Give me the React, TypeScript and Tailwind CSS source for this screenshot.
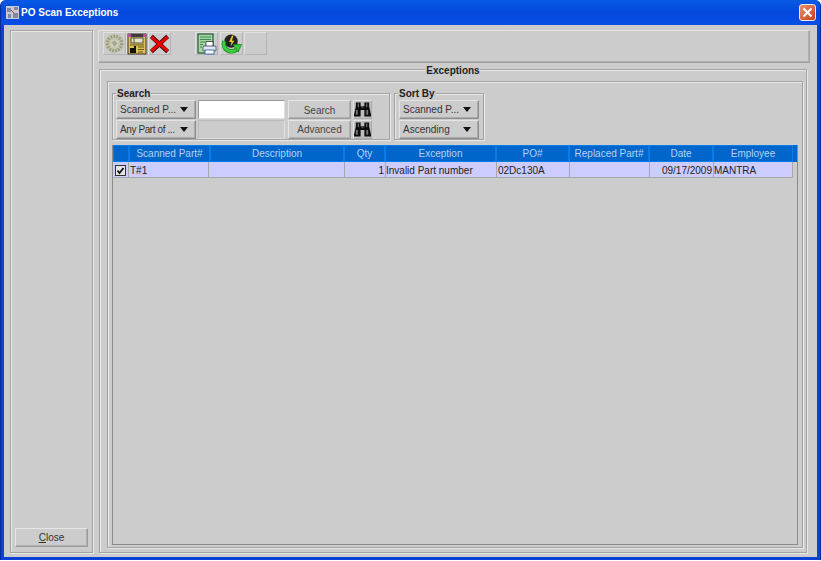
const FONT = "[font-family:'Liberation_Sans',Arial,sans-serif]";

const COLUMNS = [
  { label: "", width: "w-[16px]" },
  { label: "Scanned Part#", width: "w-[81px]" },
  { label: "Description", width: "w-[134px]" },
  { label: "Qty", width: "w-[41px]" },
  { label: "Exception", width: "w-[111px]" },
  { label: "PO#", width: "w-[73px]" },
  { label: "Replaced Part#", width: "w-[80px]" },
  { label: "Date", width: "w-[64px]" },
  { label: "Employee", width: "w-[80px]" },
];

const ETCHED = "border border-[#a3a3a3] shadow-[inset_1px_1px_0_#e8e8e8,1px_1px_0_#e8e8e8]";
const RAISED = "border border-[#9c9c9c] border-t-[#e6e6e6] border-l-[#e6e6e6] shadow-[inset_-1px_-1px_0_#b0b0b0]";

function GearIcon() {
  return (
    <svg viewBox="0 0 20 20" className="h-[21px] w-[21px]">
      <circle cx="10" cy="10" r="9.500" fill="#c4c4ae" />
      <circle cx="10" cy="10" r="6.800" fill="none" stroke="#9c9c84" strokeWidth="3" strokeDasharray="1.600 1.200" />
      <circle cx="10" cy="10" r="3.500" fill="#d2d2c0" />
      <path d="M7 9l3-2 3 3-3 3z" fill="#a8a890" />
    </svg>
  );
}

function FormIcon() {
  return (
    <svg viewBox="0 0 20 22" className="h-[22px] w-[20px]">
      <rect x="1" y="1" width="18" height="20" fill="#dcc25c" stroke="#3a3420" />
      <rect x="1" y="1" width="18" height="3" fill="#3d3d3d" />
      <rect x="1" y="1" width="3" height="3" fill="#c04aa0" />
      <rect x="16" y="1" width="3" height="3" fill="#c04aa0" />
      <rect x="4" y="5" width="12" height="5" fill="#e6e2c8" stroke="#333" strokeWidth="0.8" />
      <path d="M7 5v5M3 12h14M11 14h6M11 16.500h6M11 19h5" stroke="#5a4a10" strokeWidth="0.9" />
      <rect x="3" y="15" width="6" height="5" fill="#111" />
      <rect x="7" y="13" width="2" height="2" fill="#111" />
    </svg>
  );
}

function DeleteIcon() {
  return (
    <svg viewBox="0 0 22 20" className="h-[20px] w-[22px]">
      <path d="M2.500 2L19.500 18M19.500 2L2.500 18" stroke="#300000" strokeWidth="4.400" />
      <path d="M2.500 2.500L19.500 17.500M19.500 2.500L2.500 17.500" stroke="#ee0000" strokeWidth="3" />
    </svg>
  );
}

function PrintIcon() {
  return (
    <svg viewBox="0 0 20 22" className="h-[22px] w-[20px]">
      <rect x="1" y="1" width="15" height="19" fill="#a8d4aa" stroke="#1f5a2c" strokeWidth="1.200" />
      <path d="M3 4h11M3 6.500h11M3 9h5M3 11.500h3M3 14h2" stroke="#3f8a50" />
      <rect x="9" y="8.500" width="7" height="5" fill="#fff" stroke="#333" strokeWidth="0.8" />
      <rect x="6" y="13" width="13" height="5" rx="1" fill="#dfe8f2" stroke="#345" strokeWidth="0.8" />
      <rect x="8" y="17" width="9" height="4" fill="#fff" stroke="#2a55a0" strokeWidth="0.8" />
    </svg>
  );
}

function RefreshIcon() {
  return (
    <svg viewBox="0 0 22 22" className="h-[22px] w-[22px]">
      <circle cx="10.500" cy="8" r="7" fill="#222" />
      <path d="M11.500 2L8.500 9h2.500l-1 4.500 4-6h-2.500l1.500-5.500z" fill="#f2c81e" />
      <path d="M3.500 8a8 8 0 0 0 12.500 9" fill="none" stroke="#0c7d1a" strokeWidth="4.600" />
      <path d="M3.500 8a8 8 0 0 0 12.500 9" fill="none" stroke="#3cd03a" strokeWidth="3" />
      <path d="M12.500 11.500h9l-3.500 8z" fill="#35c935" stroke="#0c7d1a" strokeWidth="0.7" />
    </svg>
  );
}

function BinocularsIcon() {
  return (
    <svg viewBox="0 0 18 17" className="h-[17px] w-[17px]">
      <path d="M2 1h5v4h4V1h5v4l2 9v2h-7V9H7v7H0v-2l2-9z" fill="#0c0c0c" />
      <rect x="4" y="2" width="1" height="4" fill="#8a8a8a" />
      <rect x="13" y="2" width="1" height="4" fill="#8a8a8a" />
      <rect x="2" y="9" width="2" height="5" fill="#777" />
      <rect x="13" y="9" width="2" height="5" fill="#777" />
      <rect x="8" y="5" width="2" height="2" fill="#555" />
    </svg>
  );
}

function ToolButton({ children, className = "" }: { children?: React.ReactNode; className?: string }) {
  return (
    <div className={`flex h-[23px] items-center justify-center border border-[#e0e0e0] border-r-[#b4b4b4] border-b-[#b4b4b4] ${className}`}>
      {children}
    </div>
  );
}

function Combo({ label, tight = false }: { label: string; tight?: boolean }) {
  return (
    <div className="flex h-[19px] w-[80px] items-center justify-between border border-[#8e8e8e] border-t-[#e4e4e4] border-l-[#e4e4e4] pl-[3px] pr-[7px] text-[10px] text-[#333] shadow-[inset_-1px_-1px_0_#aaaaaa]">
      <span className={`whitespace-nowrap ${tight ? "tracking-[-0.4px]" : ""}`}>{label}</span>
      <span className="h-0 w-0 shrink-0 border-x-[4.5px] border-t-[5px] border-x-transparent border-t-[#111]" />
    </div>
  );
}

function PushButton({ label, className = "" }: { label: string; className?: string }) {
  return (
    <div className={`flex h-[19px] w-[63px] items-center justify-center text-[10px] text-[#444] ${RAISED} ${className}`}>
      {label}
    </div>
  );
}

function FindButton() {
  return (
    <div className="flex h-[19px] w-[19px] items-center justify-center border border-[#e2e2e2] border-b-[#aaaaaa] border-r-[#aaaaaa] bg-[#bdbdbd]">
      <BinocularsIcon />
    </div>
  );
}

function GroupBox({ title, className, children }: { title: string; className: string; children: React.ReactNode }) {
  return (
    <div className={`relative h-[47px] ${ETCHED} ${className}`}>
      <span className="absolute left-[3px] top-[-6px] bg-[#cccccc] px-[1px] text-[10px] font-bold leading-[12px] text-[#222]">
        {title}
      </span>
      {children}
    </div>
  );
}

export default function App() {
  const cell = "flex h-[16px] items-center whitespace-nowrap border-r border-[#a8a8a8] text-[10px] text-[#222]";

  return (
    <div className={`flex h-[560px] w-[821px] flex-col overflow-hidden rounded-t-[6px] border-x border-[#0a2a9c] bg-[#0a3fd8] ${FONT}`}>
      {/* Title bar */}
      <div className="flex h-[25px] shrink-0 items-center justify-between bg-gradient-to-b from-[#0a5ae6] via-[#0349dc] to-[#0a4ee6] pl-[5px] pr-[4px]">
        <div className="flex items-center gap-[2px]">
          <svg viewBox="0 0 13 13" className="h-[13px] w-[13px]">
            <rect width="13" height="13" fill="#c9c9d2" />
            <path d="M1 2h4v4H1zM8 1h4v3H8zM2 8h3v4H2zM7 7h5v5H7z" fill="#7d8aa2" />
            <path d="M5 4l3 3" stroke="#b04040" />
          </svg>
          <span className="text-[10px] font-bold leading-none text-white">PO Scan Exceptions</span>
        </div>
        <div className="flex h-[17px] w-[17px] items-center justify-center rounded-[3px] border border-[#f0e8e0] bg-gradient-to-br from-[#e8906c] to-[#c83c14]">
          <svg viewBox="0 0 11 11" className="h-[11px] w-[11px]">
            <path d="M1.500 1.500l8 8M9.500 1.500l-8 8" stroke="#fff" strokeWidth="2" />
          </svg>
        </div>
      </div>

      {/* Window body */}
      <div className="mx-[3px] mb-[3px] flex min-h-0 flex-1 gap-[5px] bg-[#cccccc] pb-[4px] pl-[6px] pr-[7px] pt-[5px]">
        {/* Left panel */}
        <div className={`flex w-[83px] shrink-0 flex-col justify-end px-[4px] pb-[5px] ${ETCHED}`}>
          <div className={`flex h-[19px] w-[73px] items-center justify-center text-[10px] text-[#333] ${RAISED}`}>
            <span><span className="underline">C</span>lose</span>
          </div>
        </div>

        {/* Right column */}
        <div className="flex min-w-0 flex-1 flex-col gap-[6px]">
          {/* Toolbar */}
          <div className="flex h-[33px] shrink-0 items-start border border-[#a0a0a0] border-t-[#e4e4e4] border-l-[#e4e4e4] pl-[4px] pt-[1px] shadow-[inset_-1px_-1px_0_#b0b0b0]">
            <ToolButton className="w-[23px]"><GearIcon /></ToolButton>
            <ToolButton className="w-[22px]"><FormIcon /></ToolButton>
            <ToolButton className="w-[23px]"><DeleteIcon /></ToolButton>
            <ToolButton className="ml-[24px] w-[23px]"><PrintIcon /></ToolButton>
            <ToolButton className="ml-[2px] w-[23px]"><RefreshIcon /></ToolButton>
            <ToolButton className="ml-[1px] w-[23px]" />
          </div>

          {/* Exceptions */}
          <div className={`relative ml-[1px] mr-[3px] flex min-h-0 flex-1 flex-col pb-[4px] pl-[7px] pr-[3px] pt-[11px] ${ETCHED}`}>
            <span className="absolute left-1/2 top-[-5px] -translate-x-1/2 bg-[#cccccc] px-[1px] text-[10px] font-bold leading-[12px] text-[#222]">
              Exceptions
            </span>
            <div className={`flex min-h-0 flex-1 flex-col pl-[4px] pr-[4px] pt-[11px] pb-[2px] ${ETCHED}`}>
              {/* Search and sort */}
              <div className="flex shrink-0 gap-[4px]">
                <GroupBox title="Search" className="w-[278px]">
                  <div className="flex gap-[2px] pl-[3px] pt-[6px]">
                    <div className="flex flex-col gap-[1px]">
                      <Combo label="Scanned P..." />
                      <Combo label="Any Part of ..." tight />
                    </div>
                    <div className="flex flex-col gap-[1px]">
                      <div className="h-[19px] w-[87px] border border-[#999] border-b-[#ddd] border-r-[#ddd] bg-white" />
                      <div className="h-[19px] w-[87px] border border-[#bbbbbb] border-b-[#e0e0e0] border-r-[#e0e0e0]" />
                    </div>
                    <div className="ml-[1px] flex flex-col gap-[1px]">
                      <PushButton label="Search" className="pt-[1px]" />
                      <PushButton label="Advanced" />
                    </div>
                    <div className="flex flex-col gap-[1px]">
                      <FindButton />
                      <FindButton />
                    </div>
                  </div>
                </GroupBox>
                <GroupBox title="Sort By" className="w-[90px]">
                  <div className="flex flex-col gap-[1px] pl-[4px] pt-[6px]">
                    <Combo label="Scanned P..." />
                    <Combo label="Ascending" />
                  </div>
                </GroupBox>
              </div>

              {/* Table */}
              <div className="mt-[5px] flex min-h-0 flex-1 flex-col border border-[#8c8c8c] border-t-0">
                <div className="flex h-[17px] shrink-0 bg-[#0066cc] pr-[4px]">
                  {COLUMNS.map((col) => (
                    <div
                      key={col.label || "check"}
                      className={`flex shrink-0 items-center justify-center whitespace-nowrap border border-[#0a7ce8] text-[10px] text-[#b6d2f4] ${col.width}`}
                    >
                      {col.label}
                    </div>
                  ))}
                </div>
                <div className="flex h-[16px] w-[680px] shrink-0 border-b border-[#a8a8a8] bg-[#ccccff]">
                  <div className={`${cell} w-[16px] justify-center`}>
                    <svg viewBox="0 0 11 11" className="h-[11px] w-[11px]">
                      <rect x="0.500" y="0.500" width="10" height="10" fill="#e4e4f0" stroke="#333" />
                      <path d="M2.500 5.500l2 2.500 4-5" fill="none" stroke="#111" strokeWidth="1.800" />
                    </svg>
                  </div>
                  <div className={`${cell} w-[80px] pl-[1px]`}>T#1</div>
                  <div className={`${cell} w-[136px]`} />
                  <div className={`${cell} w-[41px] justify-end pr-[1px]`}>1</div>
                  <div className={`${cell} w-[111px]`}>Invalid Part number</div>
                  <div className={`${cell} w-[73px] pl-[1px]`}>02Dc130A</div>
                  <div className={`${cell} w-[80px]`} />
                  <div className={`${cell} w-[64px] justify-end pr-[1px]`}>09/17/2009</div>
                  <div className={`${cell} w-[79px]`}>MANTRA</div>
                </div>
              </div>
            </div>
          </div>
        </div>
      </div>
    </div>
  );
}
